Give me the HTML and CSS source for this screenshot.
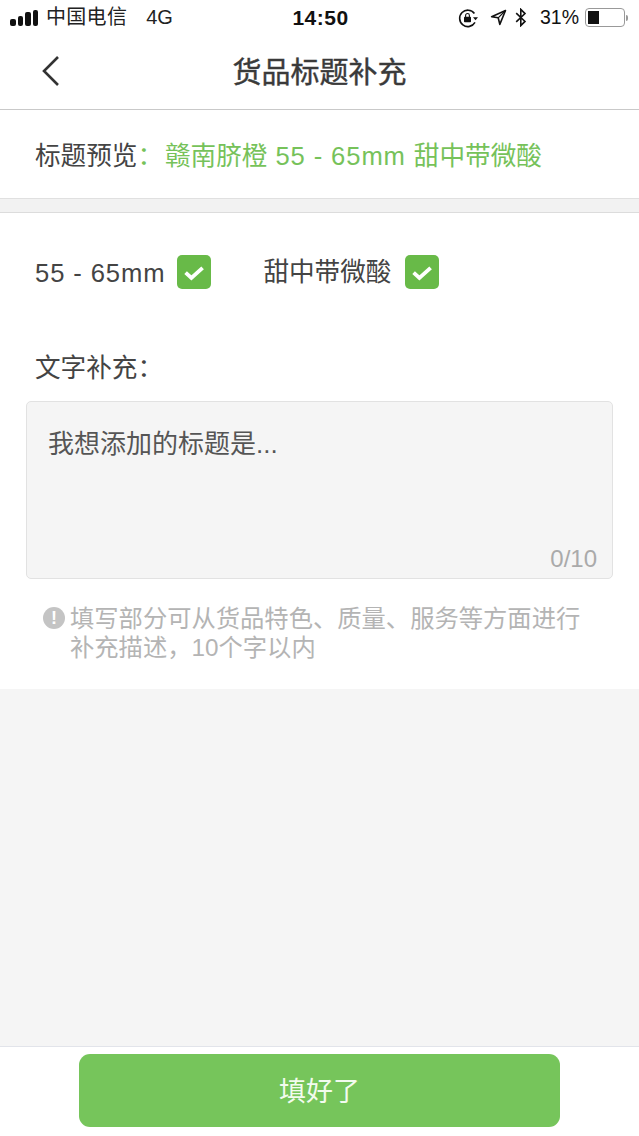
FILE: index.html
```html
<!DOCTYPE html>
<html lang="zh-CN">
<head>
  <meta charset="UTF-8" />
  <title>货品标题补充</title>
  <link rel="stylesheet" href="styles.css">
</head>
<body>
  <div class="page">
    <!-- status bar -->
    <div class="status">
      <div class="status-left">
        <span class="signal"><i class="s1"></i><i class="s2"></i><i class="s3"></i><i class="s4"></i></span>
        <span class="carrier">中国电信</span>
        <span class="net">4G</span>
      </div>
      <div class="status-time">14:50</div>
      <div class="status-right">
        <svg class="ic-lock" width="20" height="20" viewBox="0 0 20 20">
          <path d="M16.4 5.4A8.2 8.2 0 1 0 17 14.4" fill="none" stroke="#111" stroke-width="1.6"/>
          <path d="M15 9.2h5l-2.5 3z" fill="#111"/>
          <rect x="6" y="8.8" width="7" height="5.4" rx="0.8" fill="#111"/>
          <path d="M7.6 9V7.4a1.9 1.9 0 0 1 3.8 0V9" fill="none" stroke="#111" stroke-width="1.1"/>
        </svg>
        <svg class="ic-loc" width="17" height="17" viewBox="0 0 17 17">
          <path d="M15.5 1.5 1.6 7.7l6.6 1.1 1.6 6.6z" fill="none" stroke="#111" stroke-width="1.6" stroke-linejoin="round"/>
          <path d="M15.5 1.5 8.2 8.8" stroke="#111" stroke-width="1.2"/>
        </svg>
        <svg class="ic-bt" width="12" height="19" viewBox="0 0 12 19">
          <path d="M1.2 5.2 10 13.4l-4.2 4.2V1.4L10 5.6 1.2 13.8" fill="none" stroke="#111" stroke-width="1.6"/>
        </svg>
        <span class="pct">31%</span>
        <span class="battery"><span class="battery-fill"></span></span>
        <span class="battery-tip"></span>
      </div>
    </div>

    <!-- nav -->
    <div class="nav">
      <svg class="back" width="20" height="32" viewBox="0 0 20 32">
        <path d="M17 2 3 16l14 14" fill="none" stroke="#333" stroke-width="2.6"/>
      </svg>
      <h1 class="nav-title">货品标题补充</h1>
    </div>

    <div class="preview">
      <span class="preview-label">标题预览<span class="colon">：</span></span><span class="preview-text">赣南脐橙<span class="lat"> 55 - 65mm </span>甜中带微酸</span>
    </div>

    <div class="gap"></div>

    <div class="form">
      <div class="options">
        <div class="option">
          <span class="opt-num lat">55 - 65mm</span>
          <span class="check"><svg width="34" height="34" viewBox="0 0 34 34"><path d="M8.6 17.6l5.8 5.4L25.6 12.8" fill="none" stroke="#fff" stroke-width="3.8"/></svg></span>
        </div>
        <div class="option">
          <span>甜中带微酸</span>
          <span class="check"><svg width="34" height="34" viewBox="0 0 34 34"><path d="M8.6 17.6l5.8 5.4L25.6 12.8" fill="none" stroke="#fff" stroke-width="3.8"/></svg></span>
        </div>
      </div>

      <div class="field-label">文字补充：</div>

      <div class="textarea">
        <div class="placeholder">我想添加的标题是...</div>
        <div class="count">0/10</div>
      </div>

      <div class="hint">
        <span class="hint-icon">!</span>
        <p>填写部分可从货品特色、质量、服务等方面进行<br>补充描述，10个字以内</p>
      </div>
    </div>

    <div class="spacer"></div>

    <div class="footer">
      <button class="submit">填好了</button>
    </div>
  </div>
</body>
</html>
```

FILE: styles.css
```css
* {
  box-sizing: border-box;
}

html, body {
  margin: 0;
  height: 100%;
}

body {
  font-family: "Liberation Sans", "Noto Sans CJK SC", sans-serif;
  color: #3a3a3a;
  background: #f5f5f5;
}

.page {
  height: 1136px;
  display: flex;
  flex-direction: column;
  overflow: hidden;
}

/* status bar */
.status {
  height: 36px;
  background: #fff;
  display: flex;
  align-items: center;
  justify-content: space-between;
  padding: 0 11px 1px 10px;
  color: #111;
  font-size: 20px;
}

.status-left {
  width: 240px;
  display: flex;
  align-items: center;
}

.signal {
  display: flex;
  align-items: flex-end;
  gap: 2px;
  margin-right: 8px;
}

.signal i {
  display: block;
  width: 5.5px;
  background: #111;
  border-radius: 2px;
}

.s1 { height: 7px; }
.s2 { height: 10px; }
.s3 { height: 14px; }
.s4 { height: 16px; }

.carrier {
  font-size: 20px;
  line-height: 24px;
  letter-spacing: 0.3px;
  color: #222;
  margin-top: -1px;
}

.net {
  margin-left: 19px;
  font-size: 20px;
  color: #222;
}

.status-time {
  margin-left: 3px;
  font-size: 21px;
  font-weight: 700;
  letter-spacing: 0.5px;
}

.status-right {
  width: 240px;
  display: flex;
  align-items: center;
  justify-content: flex-end;
}

.ic-lock { margin-right: 12px; }
.ic-loc { margin-right: 8px; }
.ic-bt { margin-right: 13px; }

.pct {
  font-size: 19.5px;
  margin-right: 6px;
}

.battery {
  width: 40px;
  height: 19px;
  border: 1.5px solid #999;
  border-radius: 4px;
  padding: 2px;
  display: block;
}

.battery-fill {
  display: block;
  width: 11px;
  height: 100%;
  background: #111;
}

.battery-tip {
  width: 2px;
  height: 6px;
  margin-left: 1px;
  background: #999;
  border-radius: 0 2px 2px 0;
}

/* nav */
.nav {
  height: 74px;
  background: #fff;
  border-bottom: 1px solid #c9c9c9;
  display: flex;
  align-items: center;
  justify-content: center;
  position: relative;
  padding-bottom: 5px;
}

.back {
  position: absolute;
  left: 41px;
  top: 19px;
}

.nav-title {
  margin: 0;
  font-size: 29px;
  font-weight: 400;
  -webkit-text-stroke: 0.4px #3a3a3a;
  color: #3a3a3a;
}

/* preview */
.preview {
  height: 89px;
  background: #fff;
  border-bottom: 1px solid #e0e0e0;
  padding: 0 35px 1px;
  display: flex;
  align-items: center;
  font-size: 25.6px;
  white-space: pre;
}

.preview-label {
  width: 130px;
  color: #444;
}

.colon {
  color: #76c25a;
}

.preview-text {
  color: #76c25a;
}

.lat {
  letter-spacing: 0.9px;
}

.gap {
  height: 14px;
  background: #f2f2f2;
  border-bottom: 1px solid #dcdcdc;
}

/* form */
.form {
  background: #fff;
  height: 476px;
  padding: 0 26px;
}

.options {
  display: flex;
  align-items: center;
  gap: 52px;
  padding: 42px 0 0 9px;
}

.option {
  height: 34px;
  display: flex;
  align-items: center;
  gap: 12px;
  font-size: 25.6px;
  line-height: 34px;
  color: #444;
}

.option + .option {
  gap: 14px;
}

.opt-num {
  padding-top: 2px;
}

.check {
  width: 34px;
  height: 34px;
  border-radius: 5px;
  background: #68ba48;
  display: block;
}

.check svg {
  display: block;
}

.field-label {
  margin: 62px 0 0 9px;
  font-size: 25.6px;
  line-height: 34px;
  color: #444;
}

.textarea {
  position: relative;
  margin-top: 16px;
  height: 178px;
  width: 587px;
  background: #f5f5f5;
  border: 1px solid #e2e2e2;
  border-radius: 5px;
  padding: 27px 21px;
}

.placeholder {
  font-size: 26px;
  line-height: 30px;
  color: #555;
}

.count {
  position: absolute;
  right: 15px;
  bottom: 5px;
  font-size: 24px;
  color: #aaa;
}

.hint {
  display: flex;
  margin: 25px 0 0 17px;
  color: #b4b4b4;
  font-size: 24.3px;
}

.hint-icon {
  width: 22px;
  height: 22px;
  margin: 3px 5px 0 0;
  border-radius: 50%;
  background: #c4c4c4;
  color: #fff;
  font-size: 18px;
  font-weight: 700;
  line-height: 22px;
  text-align: center;
  flex: none;
}

.hint p {
  margin: 0;
  line-height: 29px;
}

.spacer {
  flex: 1;
}

/* footer */
.footer {
  height: 90px;
  background: #fff;
  border-top: 1px solid #e2e4ea;
  padding-top: 7px;
  display: flex;
  justify-content: center;
}

.submit {
  width: 481px;
  height: 73px;
  padding: 0 0 3px;
  border: none;
  border-radius: 11px;
  background: #76c55b;
  color: #f2fbee;
  font-family: inherit;
  font-size: 27px;
}
```
